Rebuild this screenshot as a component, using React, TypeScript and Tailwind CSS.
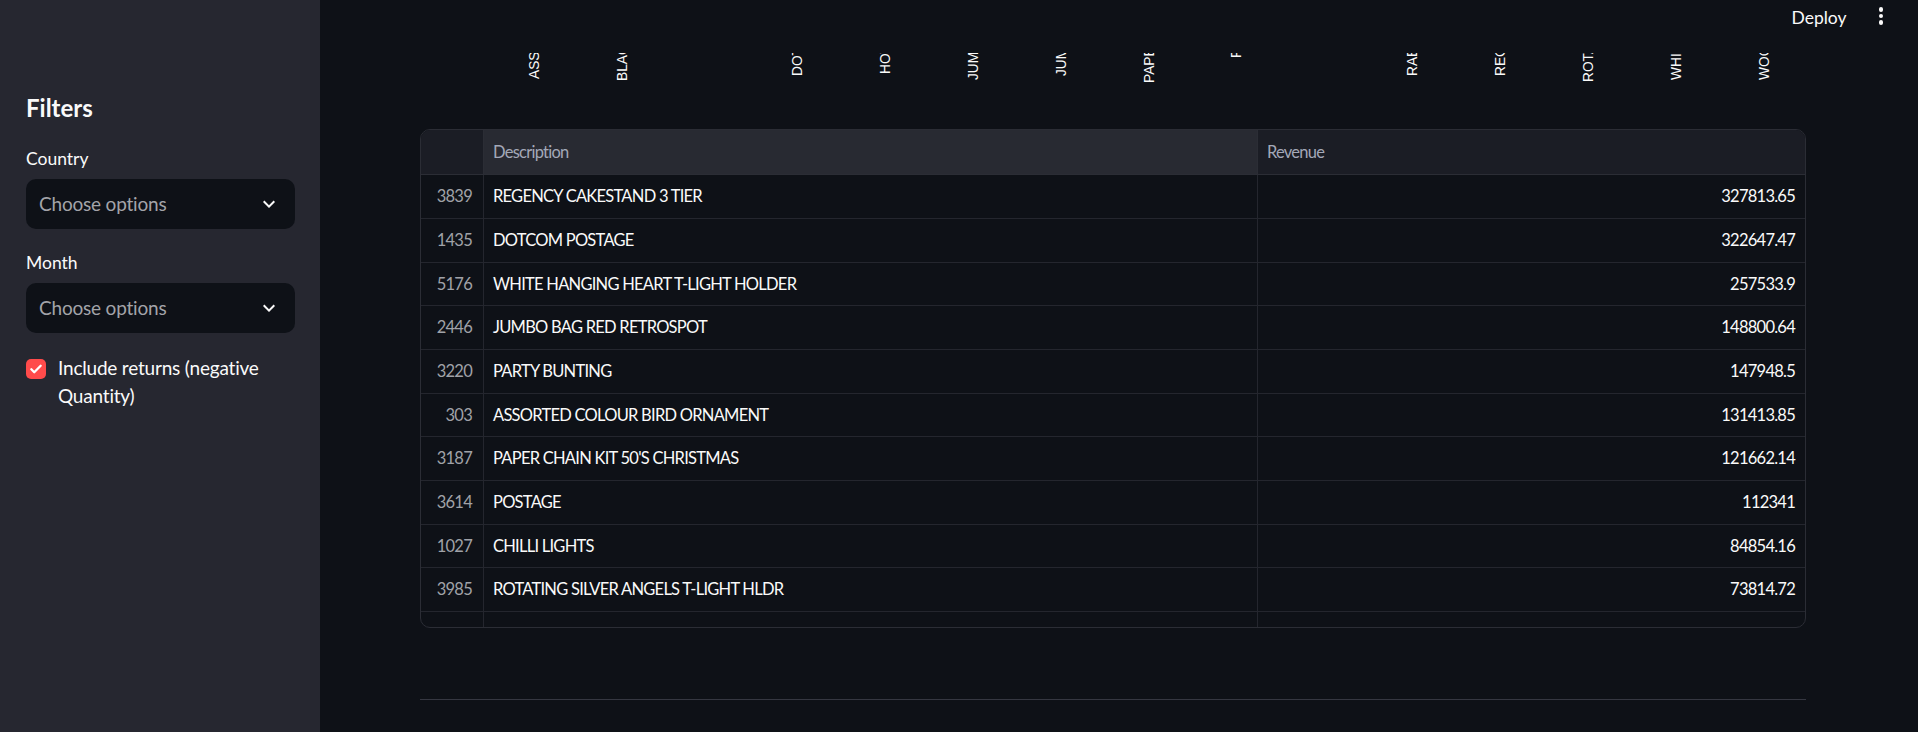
import React from "react";

const FONT = { fontFamily: '"Lato", "Noto Sans", sans-serif' } as const;

const rows: [string, string, string, string][] = [
  ["3839", "REGENCY CAKESTAND 3 TIER", "327813.65", "h-[44px]"],
  ["1435", "DOTCOM POSTAGE", "322647.47", "h-[44px]"],
  ["5176", "WHITE HANGING HEART T-LIGHT HOLDER", "257533.9", "h-[43px]"],
  ["2446", "JUMBO BAG RED RETROSPOT", "148800.64", "h-[44px]"],
  ["3220", "PARTY BUNTING", "147948.5", "h-[44px]"],
  ["303", "ASSORTED COLOUR BIRD ORNAMENT", "131413.85", "h-[43px]"],
  ["3187", "PAPER CHAIN KIT 50'S CHRISTMAS", "121662.14", "h-[44px]"],
  ["3614", "POSTAGE", "112341", "h-[44px]"],
  ["1027", "CHILLI LIGHTS", "84854.16", "h-[43px]"],
  ["3985", "ROTATING SILVER ANGELS T-LIGHT HLDR", "73814.72", "h-[44px]"],
];

// x = right edge of rotated glyphs (absolute page x), y = bottom of text in strip coords
const labels: { t: string; x: number; y: number }[] = [
  { t: "ASSORTED COLOUR BIRD ORNAMENT", x: 539, y: 26 },
  { t: "BLACK RECORD COVER FRAME", x: 627, y: 28 },
  { t: "DOTCOM POSTAGE", x: 802, y: 23 },
  { t: "HOT WATER BOTTLE KEEP CALM", x: 890, y: 21 },
  { t: "JUMBO BAG RED RETROSPOT", x: 978, y: 27 },
  { t: "JUMBO SHOPPER VINTAGE RED PAISLEY", x: 1066, y: 23 },
  { t: "PAPER CHAIN KIT 50'S CHRISTMAS", x: 1154, y: 30 },
  { t: "PARTY BUNTING", x: 1241, y: 5 },
  { t: "RABBIT NIGHT LIGHT", x: 1417, y: 23 },
  { t: "REGENCY CAKESTAND 3 TIER", x: 1505, y: 23 },
  { t: "ROTATING SILVER ANGELS T-LIGHT HLDR", x: 1593, y: 29 },
  { t: "WHITE HANGING HEART T-LIGHT HOLDER", x: 1681, y: 27 },
  { t: "WOODEN STAR CHRISTMAS SCANDINAVIAN", x: 1769, y: 27 },
];

function Chevron() {
  return (
    <svg width="24" height="24" viewBox="0 0 24 24" fill="#fafafa">
      <path d="M16.59 8.59L12 13.17 7.41 8.59 6 10l6 6 6-6z" />
    </svg>
  );
}

function Select() {
  return (
    <div className="flex h-[50px] w-[269px] items-center justify-between rounded-[10px] bg-[#0e1117] pl-[13px] pr-[14px]">
      <span className="text-[19px] leading-[24px] tracking-[-0.2px] text-[#a3a4a9]">Choose options</span>
      <Chevron />
    </div>
  );
}

export default function App() {
  return (
    <div className="flex h-[732px] w-full overflow-hidden bg-[#0e1117]" style={FONT}>
      {/* Sidebar */}
      <div className="flex w-[320px] shrink-0 flex-col bg-[#262730] px-[26px] pt-[93px]">
        <div className="h-[30px] text-[24px] font-bold leading-[30px] text-[#fafafa]">Filters</div>
        <div className="mt-[24px] h-[24px] text-[17.5px] leading-[24px] text-[#fafafa]">Country</div>
        <div className="mt-[8px]">
          <Select />
        </div>
        <div className="mt-[22px] h-[24px] text-[17.5px] leading-[24px] text-[#fafafa]">Month</div>
        <div className="mt-[8px]">
          <Select />
        </div>
        <div className="mt-[21px] flex items-start gap-[12px]">
          <div className="mt-[5px] flex h-[20px] w-[20px] shrink-0 items-center justify-center rounded-[5px] bg-[#ff4b4b]">
            <svg width="14" height="14" viewBox="0 0 24 24" fill="none" stroke="#ffffff" strokeWidth="4" strokeLinecap="round" strokeLinejoin="round">
              <path d="M4 12.5l5 5L20 6.5" />
            </svg>
          </div>
          <div className="text-[19px] leading-[28px] tracking-[-0.2px] text-[#fafafa]">Include returns (negative Quantity)</div>
        </div>
      </div>

      {/* Main */}
      <div className="flex min-w-0 flex-1 flex-col">
        <div className="flex h-[53px] shrink-0 items-start justify-end pr-[34px] pt-[6px]">
          <span className="text-[17.5px] leading-[24px] text-[#fafafa]">Deploy</span>
          <div className="ml-[31px] mt-[1px] flex flex-col items-center gap-[2px] px-[1px]">
            <span className="h-[4.5px] w-[4.5px] rounded-full bg-[#fafafa]" />
            <span className="h-[4.5px] w-[4.5px] rounded-full bg-[#fafafa]" />
            <span className="h-[4.5px] w-[4.5px] rounded-full bg-[#fafafa]" />
          </div>
        </div>

        {/* Chart strip (scrolled under header) */}
        <div className="h-[76px] shrink-0 overflow-hidden">
          <svg width="1598" height="76" className="block">
            {labels.map((l) => (
              <text
                key={l.t}
                transform={`translate(${l.x - 320},${l.y}) rotate(-90)`}
                fill="#fafafa"
                fontSize="13.75"
                fontFamily='"Liberation Sans", Arial, sans-serif'
              >
                {l.t}
              </text>
            ))}
          </svg>
        </div>

        {/* Table */}
        <div className="ml-[100px] h-[499px] w-[1386px] shrink-0 overflow-hidden rounded-[10px] border border-[#2b2d35] bg-[#0e1117] text-[16.5px] tracking-[-0.75px]">
          <div className="flex h-[45px] border-b border-[#2b2d35] text-[#a3a8b8]">
            <div className="w-[63px] shrink-0 border-r border-[#2b2d35] bg-[#1b1d25]" />
            <div className="flex w-[774px] shrink-0 items-center border-r border-[#2b2d35] bg-[#282a32] pl-[9px]">Description</div>
            <div className="flex flex-1 items-center bg-[#1b1d25] pl-[9px]">Revenue</div>
          </div>
          {rows.map(([i, d, r, h]) => (
            <div key={i} className={`flex border-b border-[#24262e] ${h}`}>
              <div className="flex w-[63px] shrink-0 items-center justify-end border-r border-[#24262e] pr-[11px] text-[#a0a2a8]">{i}</div>
              <div className="flex w-[774px] shrink-0 items-center border-r border-[#24262e] pl-[9px] text-[#fafafa]">{d}</div>
              <div className="flex flex-1 items-center justify-end pr-[10px] text-[#fafafa]">{r}</div>
            </div>
          ))}
          <div className="flex h-[15px]">
            <div className="w-[63px] shrink-0 border-r border-[#24262e]" />
            <div className="w-[774px] shrink-0 border-r border-[#24262e]" />
            <div className="flex-1" />
          </div>
        </div>

        <div className="ml-[100px] mt-[71px] h-px w-[1386px] shrink-0 bg-[#353741]" />
      </div>
    </div>
  );
}
